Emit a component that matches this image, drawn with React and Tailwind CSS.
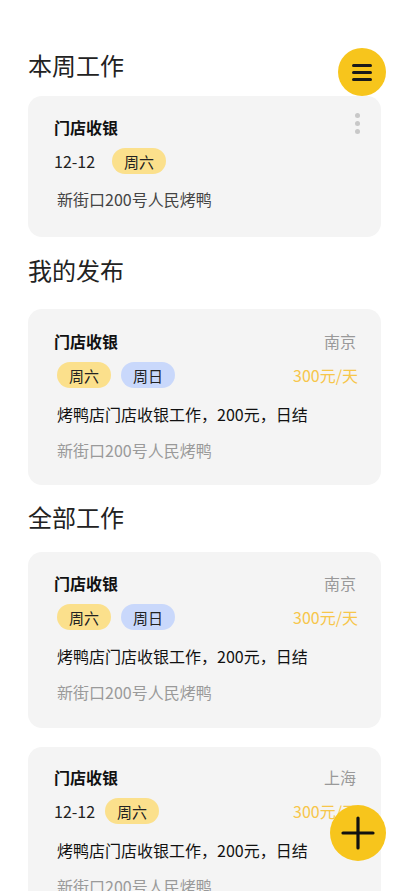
import React from "react";

const FONT = { fontFamily: '"Noto Sans CJK SC", "Noto Sans", sans-serif' };

const Tag = ({ text, tone = "yellow" }) => (
  <span
    className={`inline-flex items-center justify-center h-[26px] px-[12px] rounded-full text-[15px] leading-none text-[#222] ${
      tone === "yellow" ? "bg-[#fbe08c]" : "bg-[#c9d8fb]"
    }`}
  >
    {text}
  </span>
);

const JobCard = ({ city, date, tags, top = "pt-[20px]", bottom = "pb-[25px]" }) => (
  <div className={`rounded-[14px] bg-[#f4f4f4] pl-[26px] pr-[25px] ${top} ${bottom}`}>
    <div className="flex items-center justify-between h-[22px]">
      <span className="text-[16px] font-bold text-[#111]">门店收银</span>
      <span className="text-[16px] text-[#999]">{city}</span>
    </div>
    <div className="flex items-center justify-between mt-[10px] h-[26px]">
      <div className="flex items-center">
        {date && <span className="text-[16px] text-[#222] mr-[10px]">{date}</span>}
        <div className={`flex items-center gap-[10px] ${date ? "" : "ml-[3px]"}`}>
          {tags.map((t) => (
            <Tag key={t.text} text={t.text} tone={t.tone} />
          ))}
        </div>
      </div>
      <span className="text-[16px] text-[#f7c64a] mr-[-2px]">300元/天</span>
    </div>
    <div className="mt-[15px] ml-[3px] text-[16px] leading-[22px] text-[#111]">
      烤鸭店门店收银工作，200元，日结
    </div>
    <div className="mt-[14px] ml-[3px] text-[16px] leading-[22px] text-[#9a9a9a]">
      新街口200号人民烤鸭
    </div>
  </div>
);

export default function App() {
  return (
    <div className="relative min-h-screen bg-white px-[28px] pt-[49px] pb-[40px]" style={FONT}>
      <h2 className="text-[24px] leading-[32px] font-normal text-[#222]">本周工作</h2>

      <button className="absolute left-[338px] top-[48px] w-[48px] h-[48px] rounded-full bg-[#f7c51c] flex flex-col items-center justify-center gap-[4px]">
        <span className="block w-[20px] h-[3px] rounded-full bg-[#1a1a1a]" />
        <span className="block w-[20px] h-[3px] rounded-full bg-[#1a1a1a]" />
        <span className="block w-[20px] h-[3px] rounded-full bg-[#1a1a1a]" />
      </button>

      <div className="mt-[15px] rounded-[14px] bg-[#f4f4f4] pl-[26px] pr-[21px] pt-[20px] pb-[27px]">
        <div className="flex items-start justify-between">
          <span className="text-[16px] leading-[22px] font-bold text-[#111]">门店收银</span>
          <div className="flex flex-col gap-[3px] mt-[-3px]">
            <span className="block w-[5px] h-[5px] rounded-full bg-[#c8c8c8]" />
            <span className="block w-[5px] h-[5px] rounded-full bg-[#c8c8c8]" />
            <span className="block w-[5px] h-[5px] rounded-full bg-[#c8c8c8]" />
          </div>
        </div>
        <div className="flex items-center mt-[10px] h-[26px]">
          <span className="text-[16px] text-[#222] mr-[17px]">12-12</span>
          <Tag text="周六" />
        </div>
        <div className="mt-[14px] ml-[3px] text-[16px] leading-[22px] text-[#444]">新街口200号人民烤鸭</div>
      </div>

      <h2 className="mt-[17px] text-[24px] leading-[32px] font-normal text-[#222]">我的发布</h2>
      <div className="mt-[23px]">
        <JobCard
          city="南京"
          top="pt-[21px]"
          bottom="pb-[24px]"
          tags={[
            { text: "周六", tone: "yellow" },
            { text: "周日", tone: "blue" },
          ]}
        />
      </div>

      <h2 className="mt-[16px] text-[24px] leading-[32px] font-normal text-[#222]">全部工作</h2>
      <div className="mt-[19px] flex flex-col gap-[19px]">
        <JobCard
          city="南京"
          tags={[
            { text: "周六", tone: "yellow" },
            { text: "周日", tone: "blue" },
          ]}
        />
        <JobCard city="上海" date="12-12" top="pt-[19px]" tags={[{ text: "周六", tone: "yellow" }]} />
        <JobCard
          city="南京"
          tags={[
            { text: "周六", tone: "yellow" },
            { text: "周日", tone: "blue" },
          ]}
        />
      </div>

      <button className="fixed right-[23px] bottom-[30px] w-[56px] h-[56px] rounded-full bg-[#f7c51c] flex items-center justify-center">
        <svg width="34" height="34" viewBox="0 0 34 34">
          <path d="M17 2v30M2 17h30" stroke="#111" strokeWidth="3.2" strokeLinecap="round" />
        </svg>
      </button>
    </div>
  );
}
